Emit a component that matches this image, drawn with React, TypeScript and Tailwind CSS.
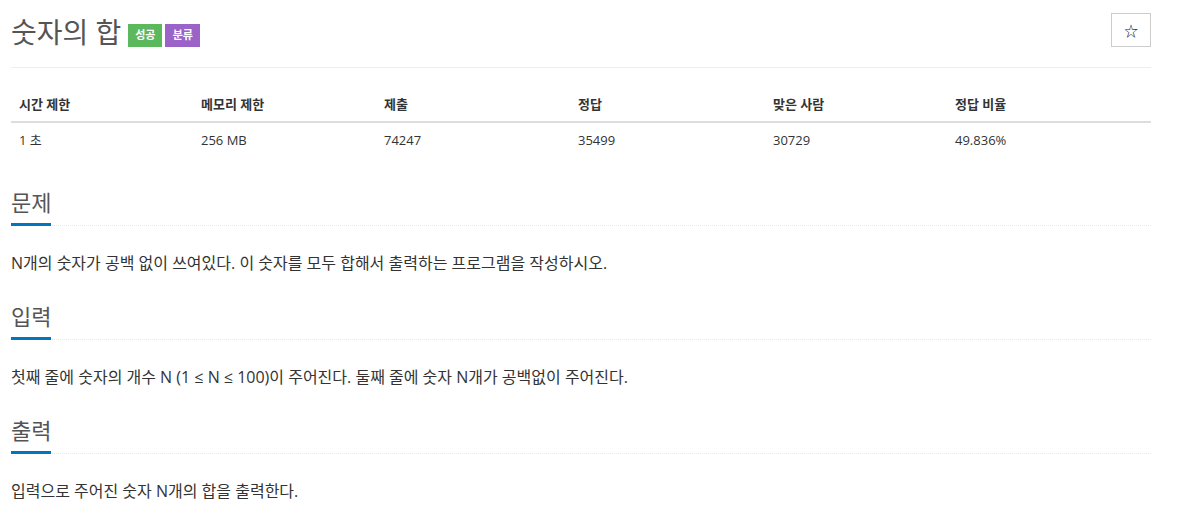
import React from "react";

const font = { fontFamily: '"Open Sans", "Noto Sans CJK KR", sans-serif' };

function Section({ title, text, first }: { title: string; text: string; first?: boolean }) {
  return (
    <section className={first ? "mt-[31px]" : "mt-[27px]"}>
      <div className="border-b border-dotted border-[#e4e9f0] flex">
        <h2 className="text-[22px] leading-[30px] text-[#555] border-b-[3px] border-[#0076c0] -mb-px pb-[6px] font-normal">
          {title}
        </h2>
      </div>
      <p className="text-[16px] leading-[22px] text-[#333] mt-[26px]">{text}</p>
    </section>
  );
}

export default function App() {
  const heads = ["시간 제한", "메모리 제한", "제출", "정답", "맞은 사람", "정답 비율"];
  const vals = ["1 초", "256 MB", "74247", "35499", "30729", "49.836%"];
  const widths = ["w-[182px]", "w-[183px]", "w-[194px]", "w-[195px]", "w-[182px]", "w-[204px]"];
  return (
    <div className="bg-white w-[1180px] h-[519px] overflow-hidden" style={font}>
      <div className="ml-[11px] w-[1140px]">
        <div className="flex items-start border-b border-[#eee] h-[68px]">
          <h1 className="flex items-center mt-[14px] h-[36px]">
            <span className="text-[28px] leading-[36px] text-[#555]">숫자의 합</span>
            <span className="ml-[7px] mt-[6px] bg-[#5cb85c] text-white text-[11px] font-bold h-[23px] w-[34px] flex items-center justify-center">
              성공
            </span>
            <span className="ml-[3px] mt-[6px] bg-[#9b63c8] text-white text-[11px] font-bold h-[23px] w-[35px] flex items-center justify-center">
              분류
            </span>
          </h1>
          <div className="ml-auto mt-[13px] w-[40px] h-[34px] border border-[#ccc] flex items-center justify-center text-[#222] text-[14px]">
            ☆
          </div>
        </div>
        <table className="mt-[19px] w-[1140px] border-collapse text-[13px]">
          <thead>
            <tr className="border-b-2 border-[#ddd]">
              {heads.map((h, i) => (
                <th key={h} className={`${widths[i]} text-left font-bold text-[#333] px-[8px] h-[35px] leading-[20px]`}>
                  {h}
                </th>
              ))}
            </tr>
          </thead>
          <tbody>
            <tr>
              {vals.map((v) => (
                <td key={v} className="text-left text-[#333] px-[8px] h-[34px] leading-[20px]">
                  {v}
                </td>
              ))}
            </tr>
          </tbody>
        </table>
        <Section first title="문제" text="N개의 숫자가 공백 없이 쓰여있다. 이 숫자를 모두 합해서 출력하는 프로그램을 작성하시오." />
        <Section title="입력" text="첫째 줄에 숫자의 개수 N (1 ≤ N ≤ 100)이 주어진다. 둘째 줄에 숫자 N개가 공백없이 주어진다." />
        <Section title="출력" text="입력으로 주어진 숫자 N개의 합을 출력한다." />
      </div>
    </div>
  );
}
